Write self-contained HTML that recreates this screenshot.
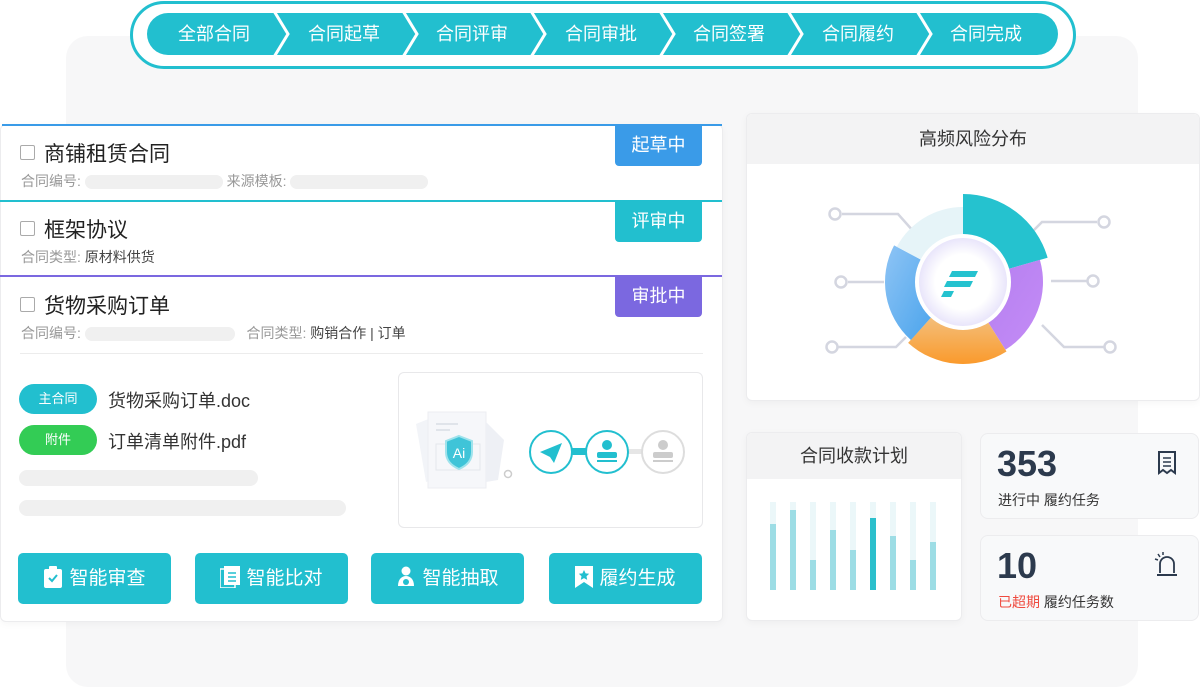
<!DOCTYPE html>
<html><head><meta charset="utf-8"><style>
*{margin:0;padding:0;box-sizing:border-box}
body{width:1200px;height:697px;background:#fff;position:relative;overflow:hidden;font-family:"Liberation Sans","Noto Sans CJK SC",sans-serif;color:#333}
.a{position:absolute}
.bg{left:66px;top:36px;width:1072px;height:651px;background:#f7f7f8;border-radius:22px}
.pill{left:130px;top:1px;width:946px;height:68px;border:3px solid #22bfcf;border-radius:34px;background:#fff}
.steps{left:147px;top:13px;width:911px;height:42px}
.st{position:absolute;top:0;height:42px;color:#fff;font-size:18px;line-height:42px;text-align:center}
.card{background:#fff;border:1px solid #ececee;border-radius:6px;box-shadow:0 2px 8px rgba(0,0,0,.04)}
.row{position:absolute;left:0;width:722px}
.cb{position:absolute;left:20px;width:15px;height:15px;border:1.5px solid #aaa;border-radius:2px}
.tt{position:absolute;left:44px;font-size:21px;color:#222}
.meta{position:absolute;left:21px;font-size:14px;color:#999}
.meta b{font-weight:normal;color:#444}
.ph{display:inline-block;height:14px;background:#f0f0f0;border-radius:7px;vertical-align:middle}
.badge{position:absolute;left:615px;width:87px;height:40px;color:#fff;font-size:18px;line-height:38px;text-align:center;border-radius:0 0 4px 4px}
.tag{position:absolute;left:19px;width:78px;height:30px;border-radius:15px;color:#fff;font-size:13px;line-height:30px;text-align:center}
.fn{position:absolute;left:108px;font-size:18px;color:#333}
.btn{position:absolute;top:553px;height:51px;width:153px;background:#22bfcf;border-radius:5px;color:#fff;font-size:19px;line-height:51px;text-align:center}
.btn svg{vertical-align:-4px;margin-right:6px}
.hd{background:#f3f3f4;text-align:center;font-size:18px;color:#333}
</style></head><body>
<div class="a bg"></div>
<div class="a pill"></div>
<div class="a steps">
<svg width="911" height="42" style="position:absolute;left:0;top:0">
<path d="M21 0H890a21 21 0 0 1 0 42H21a21 21 0 0 1 0-42z" fill="#22bfcf"/>
<g fill="none" stroke="#fff" stroke-width="3">
<path d="M127 -2L141 21L127 44"/><path d="M256 -2L270 21L256 44"/><path d="M384 -2L398 21L384 44"/><path d="M513 -2L527 21L513 44"/><path d="M641 -2L655 21L641 44"/><path d="M770 -2L784 21L770 44"/>
</g></svg>
<div class="st" style="left:0;width:134px">全部合同</div>
<div class="st" style="left:132px;width:130px">合同起草</div>
<div class="st" style="left:260px;width:130px">合同评审</div>
<div class="st" style="left:389px;width:130px">合同审批</div>
<div class="st" style="left:517px;width:130px">合同签署</div>
<div class="st" style="left:646px;width:130px">合同履约</div>
<div class="st" style="left:774px;width:130px">合同完成</div>
</div>

<!-- left card -->
<div class="a card" style="left:0;top:124px;width:723px;height:498px"></div>
<div class="a" style="left:2px;top:124px;width:720px;height:2px;background:#3a9be8"></div>
<div class="a" style="left:0;top:200px;width:722px;height:2px;background:#22bfcf"></div>
<div class="a" style="left:0;top:275px;width:722px;height:2px;background:#7b68e0"></div>
<div class="badge" style="top:126px;background:#3a9be8">起草中</div>
<div class="badge" style="top:202px;background:#22bfcf">评审中</div>
<div class="badge" style="top:277px;background:#7b68e0">审批中</div>
<div class="cb" style="top:145px"></div><div class="tt" style="top:138px">商铺租赁合同</div>
<div class="meta" style="top:171px">合同编号: <span class="ph" style="width:138px"></span> 来源模板: <span class="ph" style="width:138px"></span></div>
<div class="cb" style="top:221px"></div><div class="tt" style="top:214px">框架协议</div>
<div class="meta" style="top:247px">合同类型: <b>原材料供货</b></div>
<div class="cb" style="top:297px"></div><div class="tt" style="top:290px">货物采购订单</div>
<div class="meta" style="top:323px">合同编号: <span class="ph" style="width:150px"></span> &nbsp; 合同类型: <b>购销合作 | 订单</b></div>
<div class="a" style="left:20px;top:353px;width:683px;height:1px;background:#ececec"></div>
<div class="tag" style="top:384px;background:#22bfcf">主合同</div><div class="fn" style="top:387px">货物采购订单.doc</div>
<div class="tag" style="top:425px;background:#33cc55">附件</div><div class="fn" style="top:428px">订单清单附件.pdf</div>
<div class="a" style="left:19px;top:470px;width:239px;height:16px;background:#f0f0f0;border-radius:8px"></div>
<div class="a" style="left:19px;top:500px;width:327px;height:16px;background:#f0f0f0;border-radius:8px"></div>
<div class="a" style="left:398px;top:372px;width:305px;height:156px;border:1px solid #e8e8ea;border-radius:6px;background:#fff"></div>
<svg class="a" style="left:398px;top:372px" width="305" height="156">
<path d="M18 52l20-8 10 60-20 6z" fill="#f2f4f8"/>
<rect x="30" y="40" width="58" height="76" fill="#f6f7fa" stroke="#eceef2"/>
<path d="M88 50l18 18-6 40-12 2z" fill="#eef0f5"/>
<path d="M38 52h22M38 58h14" stroke="#e0e4ea" stroke-width="2"/>
<rect x="38" y="72" width="44" height="26" fill="none" stroke="#e4e7ec"/>
<path d="M61 64l13 5v11c0 9-6 14-13 17c-7-3-13-8-13-17v-11z" fill="#3fc4d8" stroke="#9fe3ec" stroke-width="2"/>
<text x="61" y="86" fill="#fff" font-size="14" text-anchor="middle" font-family="Liberation Sans">Ai</text>
<circle cx="110" cy="102" r="3.5" fill="none" stroke="#ccc" stroke-width="1.5"/>
<rect x="170" y="76" width="20" height="7" fill="#22bfcf"/>
<rect x="230" y="77" width="20" height="5" fill="#e6e6e6"/>
<circle cx="153" cy="80" r="21" fill="#fff" stroke="#22bfcf" stroke-width="2"/>
<path d="M142 80l22-9-8 20-4-6z" fill="#22bfcf"/>
<circle cx="209" cy="80" r="21" fill="#fff" stroke="#22bfcf" stroke-width="2"/>
<circle cx="209" cy="73" r="5" fill="#22bfcf"/><rect x="199" y="80" width="20" height="6" rx="2" fill="#22bfcf"/><rect x="199" y="88" width="20" height="2" fill="#22bfcf"/>
<circle cx="265" cy="80" r="21" fill="#fff" stroke="#ddd" stroke-width="2"/>
<circle cx="265" cy="73" r="5" fill="#ccc"/><rect x="255" y="80" width="20" height="6" rx="2" fill="#ccc"/><rect x="255" y="88" width="20" height="2" fill="#ccc"/>
</svg>
<div class="btn" style="left:18px"><svg width="20" height="22"><rect x="1" y="3" width="18" height="19" rx="2" fill="#fff"/><rect x="6" y="0" width="8" height="4" rx="1" fill="#fff"/><path d="M6 12l3 3 5-6" stroke="#22bfcf" stroke-width="2" fill="none"/></svg>智能审查</div>
<div class="btn" style="left:195px"><svg width="20" height="22"><rect x="0" y="3" width="15" height="19" fill="none" stroke="#fff" stroke-width="1.5"/><rect x="4" y="0" width="16" height="19" fill="#fff"/><path d="M8 7h8M8 11h8M8 15h8" stroke="#22bfcf" stroke-width="1.6"/></svg>智能比对</div>
<div class="btn" style="left:371px"><svg width="20" height="22"><circle cx="10" cy="5" r="4.5" fill="#fff"/><path d="M2 20c0-7 4-10 8-10s8 3 8 10z" fill="#fff"/><circle cx="10" cy="16" r="3" fill="#22bfcf"/></svg>智能抽取</div>
<div class="btn" style="left:549px"><svg width="18" height="22"><path d="M0 0h18v22l-9-6-9 6z" fill="#fff"/><path d="M9 4l1.6 3.4 3.6.4-2.7 2.5.7 3.6-3.2-1.8-3.2 1.8.7-3.6-2.7-2.5 3.6-.4z" fill="#22bfcf"/></svg>履约生成</div>

<!-- right top card -->
<div class="a card" style="left:746px;top:113px;width:454px;height:288px;overflow:hidden"><div class="hd" style="height:50px;line-height:50px">高频风险分布</div></div>
<svg class="a" style="left:0;top:0" width="1200" height="697">
<g fill="none" stroke="#d4d6e0" stroke-width="2.5">
<path d="M842 214h56l16 18"/><circle cx="835" cy="214" r="5.5"/>
<path d="M1097 222h-55l-10 10"/><circle cx="1104" cy="222" r="5.5"/>
<path d="M848 282h36"/><circle cx="841" cy="282" r="5.5"/>
<path d="M1087 281h-36"/><circle cx="1093" cy="281" r="5.5"/>
<path d="M838 347h58l10-10"/><circle cx="832" cy="347" r="5.5"/>
<path d="M1104 347h-40l-22-22"/><circle cx="1110" cy="347" r="5.5"/>
</g>
<defs>
<linearGradient id="pu" x1="0" y1="0" x2="1" y2="1"><stop offset="0" stop-color="#b57ff0"/><stop offset="1" stop-color="#c48cf6"/></linearGradient>
<linearGradient id="or" x1="0" y1="0" x2="0" y2="1"><stop offset="0" stop-color="#f3c07e"/><stop offset="1" stop-color="#fa9a2c"/></linearGradient>
<linearGradient id="bl" x1="0" y1="0" x2="1" y2="1"><stop offset="0" stop-color="#8ec4f5"/><stop offset="1" stop-color="#4aa4ec"/></linearGradient>
<radialGradient id="ce"><stop offset=".6" stop-color="#fff"/><stop offset="1" stop-color="#e6e2fa"/></radialGradient>
</defs>
<path d="M963 194A88 88 0 0 1 1047.6 257.7L1006.2 269.6A45 45 0 0 0 963 237z" fill="#25c2cf"/>
<path d="M1039.9 259.9A80 80 0 0 1 1005.4 349.8L986.8 320.2A45 45 0 0 0 1006.2 269.6z" fill="url(#pu)"/>
<path d="M1006.5 351.5A82 82 0 0 1 908.1 342.9L932.9 315.4A45 45 0 0 0 986.8 320.2z" fill="url(#or)"/>
<path d="M910.9 340A78 78 0 0 1 894.1 245.4L923.3 260.9A45 45 0 0 0 932.9 315.4z" fill="url(#bl)"/>
<path d="M896.8 246.8A75 75 0 0 1 963 207L963 237A45 45 0 0 0 923.3 260.9z" fill="#e6f4f8"/>
<circle cx="963" cy="282" r="46" fill="url(#ce)" stroke="#fff" stroke-width="4"/>
<path d="M952 271h26l-3 6h-26zM947 281h26l-3 6h-26zM944 291h10l-3 6h-10z" fill="#25c2cf"/>
</svg>

<!-- bar chart card -->
<div class="a card" style="left:746px;top:432px;width:216px;height:189px;overflow:hidden"><div class="hd" style="height:46px;line-height:46px">合同收款计划</div></div>
<svg class="a" style="left:746px;top:432px" width="216" height="189">
<g fill="#ebf7f9"><rect x="24" y="70" width="6" height="88"/><rect x="44" y="70" width="6" height="88"/><rect x="64" y="70" width="6" height="88"/><rect x="84" y="70" width="6" height="88"/><rect x="104" y="70" width="6" height="88"/><rect x="124" y="70" width="6" height="88"/><rect x="144" y="70" width="6" height="88"/><rect x="164" y="70" width="6" height="88"/><rect x="184" y="70" width="6" height="88"/></g>
<g fill="#9ddde5"><rect x="24" y="92" width="6" height="66"/><rect x="44" y="78" width="6" height="80"/><rect x="64" y="128" width="6" height="30"/><rect x="84" y="98" width="6" height="60"/><rect x="104" y="118" width="6" height="40"/><rect x="144" y="104" width="6" height="54"/><rect x="164" y="128" width="6" height="30"/><rect x="184" y="110" width="6" height="48"/></g>
<rect x="124" y="86" width="6" height="72" fill="#2bbfcc"/>
</svg>

<!-- stats -->
<div class="a" style="left:980px;top:433px;width:219px;height:86px;background:#f8f9fa;border:1px solid #ececee;border-radius:8px"></div>
<div class="a" style="left:997px;top:443px;font-size:36px;font-weight:bold;color:#2c3a4d">353</div>
<div class="a" style="left:998px;top:490px;font-size:14px;color:#333">进行中 履约任务</div>
<svg class="a" style="left:1157px;top:451px" width="20" height="24"><path d="M2 1h16v21l-4-3-4 3-4-3-4 3z" fill="none" stroke="#2c3a4d" stroke-width="2"/><path d="M6 7h8M6 11h8M6 15h8" stroke="#2c3a4d" stroke-width="1.6"/></svg>
<div class="a" style="left:980px;top:535px;width:219px;height:86px;background:#f8f9fa;border:1px solid #ececee;border-radius:8px"></div>
<div class="a" style="left:997px;top:545px;font-size:36px;font-weight:bold;color:#2c3a4d">10</div>
<div class="a" style="left:998px;top:592px;font-size:14px;color:#333"><span style="color:#ef4b3f">已超期</span> 履约任务数</div>
<svg class="a" style="left:1154px;top:551px" width="24" height="26"><path d="M6 22v-9a7 7 0 0 1 14 0v9" fill="none" stroke="#2c3a4d" stroke-width="1.8"/><path d="M3 24h20" stroke="#2c3a4d" stroke-width="2"/><path d="M4 3l2 3M1 8l3 1M9 1l0 3" stroke="#2c3a4d" stroke-width="1.5"/></svg>
</body></html>
